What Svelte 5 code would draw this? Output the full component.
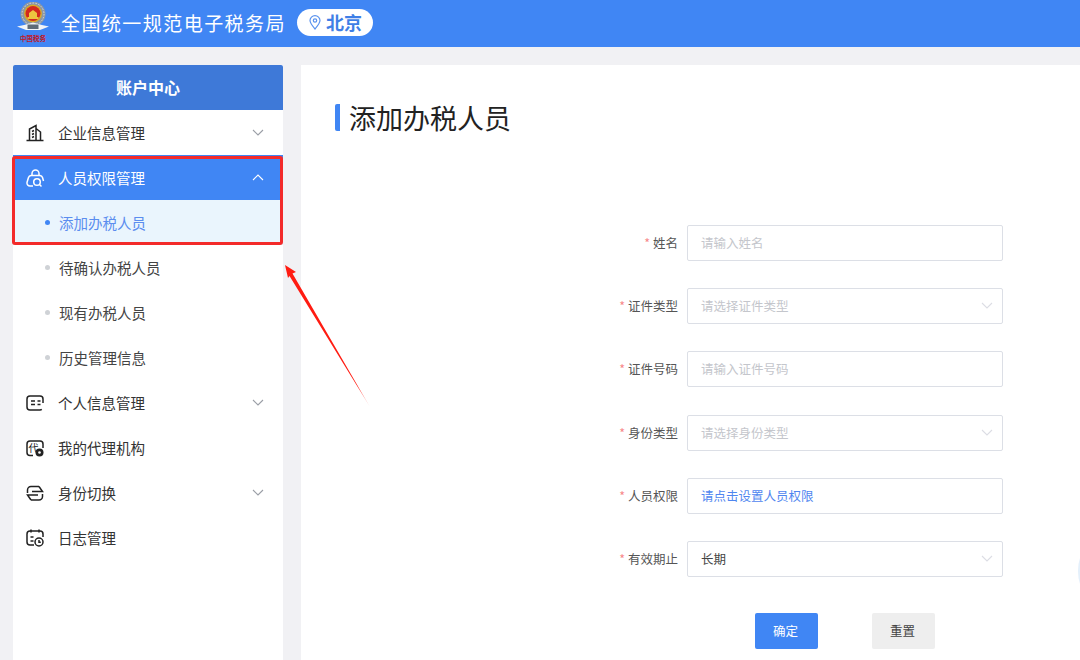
<script>
  const menu = [
    { label: '企业信息管理', icon: 'building', arrow: 'down' },
    { label: '人员权限管理', icon: 'lock', arrow: 'up', active: true },
  ];
  const subs = [
    { label: '添加办税人员', current: true },
    { label: '待确认办税人员' },
    { label: '现有办税人员' },
    { label: '历史管理信息' },
  ];
  const rest = [
    { label: '个人信息管理', icon: 'card', arrow: 'down' },
    { label: '我的代理机构', icon: 'agent' },
    { label: '身份切换', icon: 'swap', arrow: 'down' },
    { label: '日志管理', icon: 'log' },
  ];
  const fields = [
    { label: '姓名', type: 'input', text: '请输入姓名' },
    { label: '证件类型', type: 'select', text: '请选择证件类型' },
    { label: '证件号码', type: 'input', text: '请输入证件号码' },
    { label: '身份类型', type: 'select', text: '请选择身份类型' },
    { label: '人员权限', type: 'link', text: '请点击设置人员权限' },
    { label: '有效期止', type: 'value', text: '长期' },
  ];
</script>

{#snippet chevron(dir)}
  <svg class="chev" width="12" height="7" viewBox="0 0 12 7" fill="none" stroke="currentColor" stroke-width="1.1">
    {#if dir === 'up'}
      <polyline points="1,6 6,1 11,6" />
    {:else}
      <polyline points="1,1 6,6 11,1" />
    {/if}
  </svg>
{/snippet}

{#snippet icon(name)}
  <svg class="ico" width="20" height="20" viewBox="0 0 20 20" fill="none" stroke="currentColor" stroke-width="1.5">
    {#if name === 'building'}
      <path d="M1.5 17.5h17M4.5 17.5V6L11 2.5v15M11 5.5l4.5 3.5v8.5" />
      <path d="M7 8.5l2-1M7 11.5l2-1M7 14.5l2-1" />
    {:else if name === 'lock'}
      <path d="M7 7.5v-2a3.5 3.5 0 0 1 7 0v2" />
      <path d="M8 18H5a3 3 0 0 1-3-3.5l1.5-5a3 3 0 0 1 2.5-2h9a3 3 0 0 1 2.5 2l1 3.5" />
      <circle cx="12" cy="14" r="3.3" />
      <path d="M14.5 16.5l2 2" />
    {:else if name === 'card'}
      <path d="M18 10V6a3 3 0 0 0-3-3H5a3 3 0 0 0-3 3v8a3 3 0 0 0 3 3h10a3 3 0 0 0 1.8-.6" />
      <path d="M6 8h4M12.5 8h3M6 11.5h4M12.5 11.5h3" />
    {:else if name === 'agent'}
      <path d="M8 17.5H5a3 3 0 0 1-3-3V6a3 3 0 0 1 3-3h10a3 3 0 0 1 3 3v4" />
      <text x="3.6" y="13.5" font-size="10" fill="currentColor" stroke="none">代</text>
      <circle cx="14.5" cy="14.5" r="4" fill="currentColor" stroke="none" />
      <circle cx="14.5" cy="14.5" r="1.3" fill="#fff" stroke="none" />
    {:else if name === 'swap'}
      <path d="M2.5 10V7A3.5 3.5 0 0 1 6 3.5h8" />
      <path d="M7 8.5h10.5L14 3.5" />
      <path d="M17.5 11v2.5A3.5 3.5 0 0 1 14 17H6" />
      <path d="M13 12H2.5L6 17" />
    {:else}
      <path d="M9 17H5a3 3 0 0 1-3-3V6a3 3 0 0 1 3-3h10a3 3 0 0 1 3 3v3" />
      <path d="M6 1.5v3M14 1.5v3M5.5 9h3M5.5 13h3" />
      <circle cx="14" cy="14" r="4" />
      <path d="M14 12v2.3h1.8" />
    {/if}
  </svg>
{/snippet}

{#snippet emblem()}
  <svg class="emblem" width="34" height="44" viewBox="0 0 34 44">
    <circle cx="17" cy="12" r="12.5" fill="#8c97a3" />
    <circle cx="17" cy="12" r="11" fill="none" stroke="#d7dbe0" stroke-width="1" stroke-dasharray="1.5 1.5" />
    <circle cx="17" cy="11.5" r="9" fill="#d9a928" />
    <circle cx="17" cy="11.5" r="7.5" fill="#d3281f" />
    <path d="M11.5 15h11v2h-11zM13 11h8v4h-8zM17 8l4 3h-8z" fill="#edc53f" />
    <path d="M1 24.5Q9 23 17 20.5Q25 23 33 24.5L24 28H10Z" fill="#f2f4f7" />
    <rect x="11.5" y="22.5" width="11" height="4.5" fill="#5f6b78" />
    <text class="seal" x="17" y="39" text-anchor="middle">中国税务</text>
  </svg>
{/snippet}

<div class="page">
  <header class="top">
    {@render emblem()}
    <span class="site">全国统一规范电子税务局</span>
    <span class="city">
      <svg width="12" height="15" viewBox="0 0 12 15" fill="none" stroke="#5b93ee" stroke-width="1.2">
        <path d="M6 14C3 10.5 1 8.2 1 5.6a5 5 0 0 1 10 0C11 8.2 9 10.5 6 14z" />
        <circle cx="6" cy="5.5" r="1.7" />
      </svg>
      <b>北京</b>
    </span>
  </header>

  <div class="body">
    <aside class="side">
      <div class="side-title">账户中心</div>
      {#each menu as m}
        <div class="row" class:active={m.active}>
          {@render icon(m.icon)}
          <span class="grow">{m.label}</span>
          {#if m.arrow}{@render chevron(m.arrow)}{/if}
        </div>
      {/each}
      {#each subs as s}
        <div class="sub" class:current={s.current}><i></i><span>{s.label}</span></div>
      {/each}
      {#each rest as m}
        <div class="row">
          {@render icon(m.icon)}
          <span class="grow">{m.label}</span>
          {#if m.arrow}{@render chevron(m.arrow)}{/if}
        </div>
      {/each}
    </aside>

    <main class="panel">
      <h1><span>添加办税人员</span></h1>
      <form class="form">
        {#each fields as f}
          <div class="field">
            <label><em>*</em>{f.label}</label>
            <div class="box {f.type}">
              <span>{f.text}</span>
              {#if f.type === 'select' || f.type === 'value'}{@render chevron('down')}{/if}
            </div>
          </div>
        {/each}
        <div class="actions">
          <button type="button" class="ok">确定</button>
          <button type="button" class="reset">重置</button>
        </div>
      </form>
      <div class="edge"></div>
    </main>
  </div>

  <!-- annotation over the screenshot -->
  <div class="mark"></div>
  <svg class="arrow" width="100" height="160" viewBox="0 0 100 160">
    <defs>
      <linearGradient id="fade" x1="0" y1="0" x2="1" y2="1">
        <stop offset="0" stop-color="#ff1c12" />
        <stop offset="0.85" stop-color="#ff1c12" />
        <stop offset="1" stop-color="#ff1c12" stop-opacity="0.2" />
      </linearGradient>
    </defs>
    <path d="M5 3 L16 10 L12.5 11.5 L90 145 L9.5 14 L8 16 Z" fill="url(#fade)" />
  </svg>
</div>

<style>
  :global(body) {
    margin: 0;
    background: #f1f1f4;
  }
  .page {
    position: relative;
    width: 1080px;
    height: 660px;
    overflow: hidden;
    background: #f1f1f4;
    font-family: "Noto Sans CJK SC", "Liberation Sans", sans-serif;
  }
  .top {
    height: 47px;
    background: #4086f4;
    display: flex;
    align-items: center;
    padding-left: 16px;
    color: #fff;
  }
  .emblem { flex: none; }
  .seal {
    font-size: 6.5px;
    fill: #c4161c;
    font-weight: 700;
  }
  .site {
    margin: 0 0 3px 11px;
    font-size: 19px;
    letter-spacing: 1.45px;
  }
  .city {
    margin: 0 0 3px 11px;
    height: 27px;
    width: 76px;
    box-sizing: border-box;
    background: #fff;
    border-radius: 14px;
    display: flex;
    align-items: center;
    gap: 5px;
    padding-left: 12px;
    color: #3f7fe6;
  }
  .city b { font-size: 18px; font-weight: 700; line-height: 26px; }

  .body {
    display: flex;
    padding: 18px 0 0 13px;
    gap: 18px;
  }
  .side {
    width: 270px;
    flex: none;
    height: 596px;
    background: #fff;
  }
  .side-title {
    height: 45px;
    line-height: 45px;
    text-align: center;
    background: #3e79d8;
    color: #fff;
    font-size: 16px;
    font-weight: 700;
    border-radius: 2px 2px 0 0;
  }
  .row {
    height: 45px;
    box-sizing: border-box;
    display: flex;
    align-items: center;
    padding: 0 19px 0 12px;
    font-size: 14.5px;
    color: #333;
  }
  .row .ico { margin-right: 13px; color: #222; }
  .row .chev { color: #9a9ea6; }
  .grow { flex: 1; margin-bottom: 1px; }
  .row.active { background: #4086f4; color: #fff; }
  .row.active .ico, .row.active .chev { color: #fff; }
  .sub {
    height: 45px;
    display: flex;
    align-items: center;
    padding-left: 32px;
    font-size: 14.5px;
    color: #444;
  }
  .sub span { margin-bottom: 1px; }
  .sub i {
    width: 5px;
    height: 5px;
    border-radius: 50%;
    background: #cfd2d6;
    margin-right: 9px;
  }
  .sub.current { background: #eaf5fd; color: #5b8def; }
  .sub.current i { background: #4086f4; }

  .panel {
    position: relative;
    flex: 1;
    height: 596px;
    background: #fff;
  }
  h1 {
    margin: 39px 0 0 34px;
    height: 27px;
    border-left: 5px solid #4086f4;
    border-radius: 2px;
    display: flex;
    align-items: center;
    font-size: 27px;
    font-weight: 400;
    color: #222;
  }
  h1 span { margin-left: 9px; }
  .form {
    margin-top: 94px;
    display: flex;
    flex-direction: column;
  }
  .field {
    height: 36px;
    margin-bottom: 27.2px;
    display: flex;
    align-items: center;
  }
  label {
    width: 377px;
    text-align: right;
    font-size: 12.5px;
    color: #555;
    margin: 0 9px 1px 0;
  }
  label em {
    font-style: normal;
    color: #f78989;
    margin-right: 3px;
  }
  .box {
    width: 316px;
    height: 36px;
    box-sizing: border-box;
    border: 1px solid #dcdfe6;
    border-radius: 2px;
    display: flex;
    align-items: center;
    justify-content: space-between;
    padding: 0 9px 1px 13px;
    font-size: 12.5px;
    color: #c4c6cc;
  }
  .box .chev { color: #dcdde4; }
  .box.link { color: #4f86ef; }
  .box.value { color: #444; }
  .actions {
    display: flex;
    gap: 54px;
    margin: 9px 0 0 454px;
  }
  button {
    width: 63px;
    height: 36px;
    border: 0;
    border-radius: 2px;
    padding: 0 2px 1px 0;
    font: inherit;
    font-size: 12.5px;
  }
  .ok { background: #4086f4; color: #fff; }
  .reset { background: #eeeeee; color: #444; }
  .edge {
    position: absolute;
    right: -13px;
    top: 487px;
    width: 15px;
    height: 38px;
    border-radius: 50%;
    background: #e4f0fb;
  }

  .mark {
    position: absolute;
    left: 12px;
    top: 156px;
    width: 271px;
    height: 89px;
    box-sizing: border-box;
    border: 3px solid #f32a2a;
    border-radius: 3px;
  }
  .arrow {
    position: absolute;
    left: 280px;
    top: 262px;
  }
</style>
